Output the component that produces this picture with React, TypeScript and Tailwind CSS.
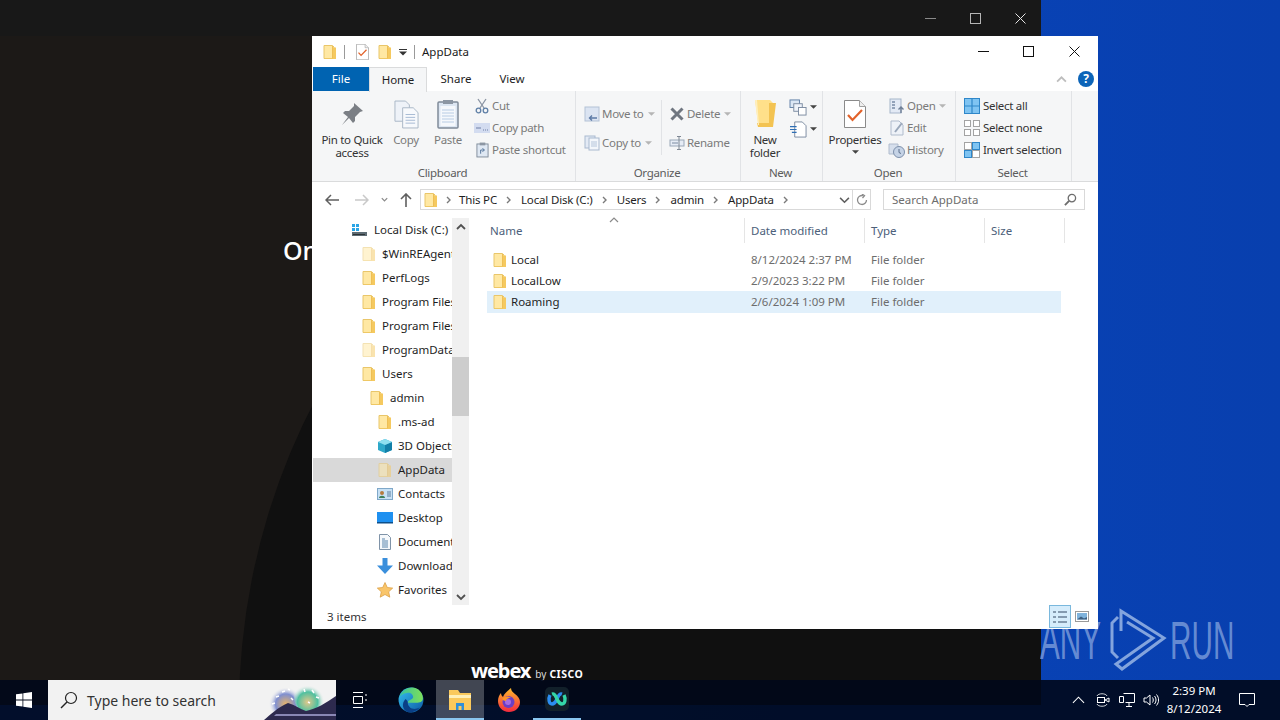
import React from "react";

const Folder = ({ className = "", pale = false }: { className?: string; pale?: boolean }) => (
  <svg viewBox="0 0 16 16" className={"shrink-0 " + className} style={{ opacity: pale ? 0.5 : 1 }}>
    <path d="M2 1.500h8.500L12 3v11.500H2z" fill="#ffe8a3" stroke="#e9c66a" strokeWidth="1" />
    <path d="M10 3.500h4v11.500H3v-.5h7z" fill="#f5c95f" />
    <path d="M10.500 2v12.500" stroke="#eebf55" strokeWidth="1" />
  </svg>
);

const Chev = ({ className = "", d = "M3 2l3 3-3 3", color = "#7a7a7a", w = 1.4 }: { className?: string; d?: string; color?: string; w?: number }) => (
  <svg viewBox="0 0 10 10" className={"shrink-0 " + className} fill="none" stroke={color} strokeWidth={w}>
    <path d={d} />
  </svg>
);

const Caret = ({ color = "#444" }: { color?: string }) => (
  <svg viewBox="0 0 8 4" className="w-[7px] h-[4px] shrink-0"><path d="M0 0h8L4 4z" fill={color} /></svg>
);

const CheckDoc = ({ className = "" }: { className?: string }) => (
  <svg viewBox="0 0 22 28" className={className}>
    <path d="M.5.500h15l6 6v21H.5z" fill="#fff" stroke="#8a8a8a" />
    <path d="M15.500.500v6h6" fill="#eee" stroke="#a0a0a0" />
    <path d="M4 15l4.500 5L18 10" fill="none" stroke="#e2622a" strokeWidth="2.200" />
  </svg>
);

const SmallBtn = ({ icon, label, dim = true, caret = false, labelClass = "ml-[1px]" }: { icon: React.ReactNode; label: string; dim?: boolean; caret?: boolean; labelClass?: string }) => (
  <div className="h-[22px] flex items-center whitespace-nowrap">
    <span className="w-[18px] h-[18px] flex items-center justify-center shrink-0">{icon}</span>
    <span className={labelClass + " " + (dim ? "text-[#7a7a7a]" : "text-[#333]")}>{label}</span>
    {caret && <span className="ml-[4px] -mt-[1px]"><Caret color={dim ? "#b5b5b5" : "#444"} /></span>}
  </div>
);

const Group = ({ label, w, children }: { label: string; w: string; children: React.ReactNode }) => (
  <div className={"relative flex flex-col h-full shrink-0 border-r border-[#e1e3e6] " + w}>
    <div className="flex-1 flex min-h-0">{children}</div>
    <div className="h-[17px] pr-[2px] text-center leading-[17px] text-[#5c5c5c]">{label}</div>
  </div>
);

const LargeBtn = ({ icon, lines, w, dim = false, caret = false }: { icon: React.ReactNode; lines: string[]; w: string; dim?: boolean; caret?: boolean }) => (
  <div className={"flex flex-col items-center shrink-0 " + w}>
    <div className="h-[38px] mt-[4px] flex items-center justify-center">{icon}</div>
    <div className={"leading-[13px] text-center whitespace-nowrap " + (dim ? "text-[#7a7a7a]" : "text-[#333]")}>
      {lines.map((l) => (
        <div key={l}>{l}</div>
      ))}
    </div>
    {caret && <div className="mt-[4px]"><Caret /></div>}
  </div>
);

const Ribbon = () => (
  <div className="h-[91px] bg-[#f5f6f7] border-b border-[#dadbdc] flex text-[11.5px] tracking-[-0.3px] shrink-0">
    <Group label="Clipboard" w="w-[264px]">
      <LargeBtn
        w="w-[80px]"
        lines={["Pin to Quick", "access"]}
        icon={
          <svg viewBox="0 0 24 24" className="w-[24px] h-[24px]">
            <path d="M14 1l9 8-3 1-5 5 0 4-2 2-4-5-7 7 6-8-5-4 2-2 4 0 5-5z" fill="#7b7f85" />
          </svg>
        }
      />
      <LargeBtn
        w="w-[28px]"
        dim
        lines={["Copy"]}
        icon={
          <svg viewBox="0 0 26 30" className="w-[25px] h-[29px]">
            <path d="M1 1h11l4 4v17H1z" fill="#eef2f8" stroke="#a9b6c6" />
            <path d="M9 8h11l5 5v16H9z" fill="#f7f9fc" stroke="#a9b6c6" />
            <path d="M12 15h10M12 18h10M12 21h10M12 24h10" stroke="#a6b9d3" />
          </svg>
        }
      />
      <div className="w-[7px]" />
      <LargeBtn
        w="w-[42px]"
        dim
        lines={["Paste"]}
        icon={
          <svg viewBox="0 0 22 30" className="w-[22px] h-[30px]">
            <rect x="1" y="3" width="20" height="26" rx="1" fill="#dce6f2" stroke="#7f8b99" strokeWidth="1.500" />
            <rect x="3.500" y="7" width="15" height="20" fill="#f5f8fc" />
            <path d="M5 11h12M5 14h12M5 17h12M5 20h12M5 23h12" stroke="#b8cce4" />
            <rect x="6" y="1" width="10" height="4" fill="#8c96a3" />
          </svg>
        }
      />
      <div className="w-[4px]" />
      <div className="pt-[4px] flex flex-col">
        <SmallBtn
          label="Cut"
          icon={
            <svg viewBox="0 0 16 16" className="w-[16px] h-[16px]" fill="none" stroke="#8a94a3" strokeWidth="1.300">
              <path d="M4 1l6 9M12 1L6 10" />
              <circle cx="4.500" cy="12.500" r="2.300" stroke="#5f7fa6" />
              <circle cx="11.500" cy="12.500" r="2.300" stroke="#5f7fa6" />
            </svg>
          }
        />
        <SmallBtn
          label="Copy path"
          icon={
            <svg viewBox="0 0 16 10" className="w-[16px] h-[10px]">
              <rect width="16" height="10" fill="#d3dcf0" />
              <path d="M2 5h5M9 7h1M11 7h1M13 7h1" stroke="#6e7fa6" strokeWidth="1.200" />
            </svg>
          }
        />
        <SmallBtn
          label="Paste shortcut"
          icon={
            <svg viewBox="0 0 14 16" className="w-[13px] h-[16px]">
              <rect x="1" y="1.500" width="12" height="14" fill="#dfe8f3" stroke="#7f8b99" />
              <rect x="4" y="0" width="6" height="3" fill="#8c96a3" />
              <path d="M5 12V8h4M7 6l2 2-2 2" fill="none" stroke="#4f6f96" />
            </svg>
          }
        />
      </div>
    </Group>
    <Group label="Organize" w="w-[165px]">
      <div className="pl-[7px] pt-[12px] w-[85px] flex flex-col gap-[7px]">
        <SmallBtn
          label="Move to"
          caret
          icon={
            <svg viewBox="0 0 16 16" className="w-[16px] h-[16px]">
              <rect x="1" y="1" width="14" height="14" fill="#dbe4f2" stroke="#b4c2d6" />
              <path d="M13 12H6M8 9.500L5.500 12 8 14.500" stroke="#5d7ba6" fill="none" strokeWidth="1.400" />
            </svg>
          }
        />
        <SmallBtn
          label="Copy to"
          caret
          icon={
            <svg viewBox="0 0 16 16" className="w-[16px] h-[16px]">
              <rect x="1" y="1" width="10" height="12" fill="#e3eaf5" stroke="#aab9cf" />
              <rect x="5" y="3" width="10" height="12" fill="#f3f6fb" stroke="#aab9cf" />
              <path d="M7 7h6M7 9h6M7 11h6" stroke="#b5c5db" />
            </svg>
          }
        />
      </div>
      <div className="w-[1px] h-[55px] mt-[9px] bg-[#e1e3e6] mr-[6px]" />
      <div className="pt-[12px] flex flex-col gap-[7px]">
        <SmallBtn
          label="Delete"
          dim
          caret
          icon={
            <svg viewBox="0 0 14 14" className="w-[14px] h-[14px]">
              <path d="M1.500 1.500l11 11M12.500 1.500l-11 11" stroke="#6f7680" strokeWidth="3" />
            </svg>
          }
        />
        <SmallBtn
          label="Rename"
          icon={
            <svg viewBox="0 0 16 16" className="w-[16px] h-[16px]" fill="none">
              <rect x="1" y="5" width="14" height="6" fill="#e6ecf5" stroke="#9aa7b8" />
              <path d="M3 8h6" stroke="#7b8aa0" />
              <path d="M10 1.500v13M8 1.500h4M8 14.500h4" stroke="#7f8894" />
            </svg>
          }
        />
      </div>
    </Group>
    <Group label="New" w="w-[82px]">
      <LargeBtn
        w="w-[48px]"
        lines={["New", "folder"]}
        icon={
          <svg viewBox="0 0 24 30" className="w-[24px] h-[30px]">
            <path d="M2 1h15l3 3v20H5z" fill="#ffe08a" />
            <path d="M16 4h7l-3 24-15 0-1-4h12z" fill="#f3c352" />
            <path d="M2 1l3 25h1L4 1z" fill="#ffefbd" />
          </svg>
        }
      />
      <div className="pt-[7px] flex flex-col gap-[4px]">
        <div className="flex items-center gap-[2px] h-[18px]">
          <svg viewBox="0 0 20 18" className="w-[19px] h-[17px]">
            <rect x="1" y="1" width="10" height="8" fill="#dbe7f5" stroke="#5f7fa6" />
            <rect x="5" y="5" width="9" height="8" fill="#eef3fa" stroke="#7b8aa0" />
            <rect x="10" y="9" width="8" height="8" fill="#fff" stroke="#7b8aa0" />
          </svg>
          <Caret />
        </div>
        <div className="flex items-center gap-[2px] h-[18px]">
          <svg viewBox="0 0 20 18" className="w-[19px] h-[17px]">
            <path d="M6 1h8l4 4v12H6z" fill="#fff" stroke="#7b8aa0" />
            <path d="M1 6h7M1 9h7M3 12h5" stroke="#2f6fb5" strokeWidth="1.200" />
          </svg>
          <Caret />
        </div>
      </div>
    </Group>
    <Group label="Open" w="w-[133px]">
      <LargeBtn w="w-[64px]" lines={["Properties"]} caret icon={<CheckDoc className="w-[22px] h-[28px]" />} />
      <div className="pt-[4px] pl-[1px] flex flex-col">
        <SmallBtn
          label="Open"
          caret
          icon={
            <svg viewBox="0 0 16 16" className="w-[16px] h-[16px]">
              <rect x="1" y="1" width="11" height="14" fill="#e3eaf5" stroke="#a6b5ca" />
              <path d="M3 4h3M3 7h3M3 10h3" stroke="#7a8ca6" strokeWidth="1.500" />
              <path d="M12 15V9M9.500 11.500L12 9l2.500 2.500" stroke="#6f7f96" fill="none" strokeWidth="1.400" />
            </svg>
          }
        />
        <SmallBtn
          label="Edit"
          icon={
            <svg viewBox="0 0 16 16" className="w-[16px] h-[16px]">
              <path d="M2 1h8l4 4v10H2z" fill="#eef2f8" stroke="#b0bccd" />
              <path d="M6 12L13 3" stroke="#9aa8bb" strokeWidth="2" />
            </svg>
          }
        />
        <SmallBtn
          label="History"
          icon={
            <svg viewBox="0 0 18 16" className="w-[18px] h-[16px]">
              <path d="M1 2h9v10H1z" fill="#d6dfec" stroke="#b0bccd" />
              <circle cx="11" cy="10" r="5.500" fill="#c5d3e6" stroke="#7d90ab" />
              <path d="M11 7v3.500l2 1" stroke="#5b6f8c" fill="none" />
            </svg>
          }
        />
      </div>
    </Group>
    <Group label="Select" w="w-[116px]">
      <div className="pl-[7px] pt-[4px] flex flex-col">
        <SmallBtn
          label="Select all"
          dim={false}
          labelClass="ml-[2px]"
          icon={
            <svg viewBox="0 0 16 16" className="w-[16px] h-[16px]">
              <rect x=".5" y=".5" width="15" height="15" fill="#7fc4f2" stroke="#2f87c9" />
              <path d="M8 0v16M0 8h16" stroke="#2f87c9" strokeWidth="1.200" />
            </svg>
          }
        />
        <SmallBtn
          label="Select none"
          dim={false}
          labelClass="ml-[2px]"
          icon={
            <svg viewBox="0 0 16 16" className="w-[16px] h-[16px]" fill="#fff" stroke="#a3a3a3">
              <rect x=".5" y=".5" width="6" height="6" />
              <rect x="9.500" y=".5" width="6" height="6" />
              <rect x=".5" y="9.500" width="6" height="6" />
              <rect x="9.500" y="9.500" width="6" height="6" />
            </svg>
          }
        />
        <SmallBtn
          label="Invert selection"
          dim={false}
          labelClass="ml-[2px]"
          icon={
            <svg viewBox="0 0 16 16" className="w-[16px] h-[16px]" stroke="#2f87c9">
              <rect x=".5" y="8.500" width="7" height="7" fill="#7fc4f2" />
              <rect x="8.500" y=".5" width="7" height="7" fill="#7fc4f2" />
              <rect x=".5" y=".5" width="7" height="7" fill="#fff" stroke="#a3a3a3" />
              <rect x="8.500" y="8.500" width="7" height="7" fill="#fff" stroke="#a3a3a3" />
            </svg>
          }
        />
      </div>
    </Group>
  </div>
);

const Crumb = ({ t }: { t: string }) => (
  <>
    <span className="whitespace-nowrap text-[#1e1e1e] tracking-[-0.17px]">{t}</span>
    <Chev className="w-[10px] h-[10px] mx-[7px]" />
  </>
);

const AddressBar = () => (
  <div className="h-[35px] flex items-center shrink-0 bg-white">
    <div className="w-[108px] flex items-center shrink-0">
      <svg viewBox="0 0 14 12" className="ml-[13px] w-[14px] h-[12px]" fill="none" stroke="#5f5f5f" strokeWidth="1.500">
        <path d="M14 6H1M6 1L1 6l5 5" />
      </svg>
      <svg viewBox="0 0 14 12" className="ml-[16px] w-[14px] h-[12px]" fill="none" stroke="#c9c9c9" strokeWidth="1.500">
        <path d="M0 6h13M8 1l5 5-5 5" />
      </svg>
      <Chev className="ml-[11px] w-[9px] h-[9px]" d="M2 3.500l3 3 3-3" color="#8a8a8a" />
      <svg viewBox="0 0 12 14" className="ml-[11px] w-[12px] h-[14px]" fill="none" stroke="#5f5f5f" strokeWidth="1.600">
        <path d="M6 14V1M1 6l5-5 5 5" />
      </svg>
    </div>
    <div className="w-[451px] h-[21px] border border-[#d9d9d9] flex items-center shrink-0">
      <Folder className="w-[16px] h-[16px] ml-[2px]" />
      <Chev className="w-[10px] h-[10px] ml-[5px] mr-[5px]" />
      <Crumb t="This PC" />
      <Crumb t="Local Disk (C:)" />
      <Crumb t="Users" />
      <Crumb t="admin" />
      <Crumb t="AppData" />
      <div className="flex-1" />
      <Chev className="w-[11px] h-[11px] mr-[1px]" d="M1 3.500l4 4 4-4" color="#5f5f5f" />
      <div className="w-[1px] h-full bg-[#d9d9d9] mx-[1px]" />
      <svg viewBox="0 0 12 12" className="w-[12px] h-[12px] mx-[2px]" fill="none" stroke="#8a8a8a" strokeWidth="1.300">
        <path d="M10.500 6A4.500 4.500 0 1 1 7 1.600" />
        <path d="M6 0l2.500 1.700L6.500 4" />
      </svg>
    </div>
    <div className="ml-[12px] w-[202px] h-[21px] border border-[#d9d9d9] flex items-center justify-between pl-[8px] pr-[7px] text-[#6d6d6d] shrink-0">
      <span>Search AppData</span>
      <svg viewBox="0 0 14 14" className="w-[13px] h-[13px]" fill="none" stroke="#6d6d6d" strokeWidth="1.400">
        <circle cx="8.500" cy="5.500" r="4" />
        <path d="M5.500 8.500L1 13" strokeWidth="2" />
      </svg>
    </div>
  </div>
);

const depthClass: Record<number, string> = { 0: "pl-[39px]", 1: "pl-[49px]", 2: "pl-[57px]", 3: "pl-[65px]" };

const DriveIcon = () => (
  <svg viewBox="0 0 16 16" className="w-[16px] h-[16px] shrink-0">
    <rect x="1" y="10" width="15" height="4" fill="#5d6b73" />
    <rect x="2" y="12" width="12" height="1" fill="#2d3336" />
    <rect x="1" y="2" width="3" height="3" fill="#2aa5e6" />
    <rect x="5" y="2" width="3" height="3" fill="#2aa5e6" />
    <rect x="1" y="6" width="3" height="3" fill="#2aa5e6" />
    <rect x="5" y="6" width="3" height="3" fill="#2aa5e6" />
  </svg>
);
const CubeIcon = () => (
  <svg viewBox="0 0 16 16" className="w-[16px] h-[16px] shrink-0">
    <path d="M8 1l7 3v8l-7 3-7-3V4z" fill="#2ea8c9" />
    <path d="M8 7l7-3v8l-7 3z" fill="#137fa8" />
    <path d="M8 1l7 3-7 3-7-3z" fill="#8fe0f0" />
  </svg>
);
const ContactsIcon = () => (
  <svg viewBox="0 0 16 16" className="w-[16px] h-[16px] shrink-0">
    <rect x=".5" y="2.500" width="15" height="11" fill="#c7e0f4" stroke="#7fa8c9" />
    <circle cx="5" cy="7" r="2" fill="#b57b3e" />
    <path d="M2 12c0-3 6-3 6 0z" fill="#3e7f5a" />
    <path d="M10 6h4M10 8h4M10 10h4" stroke="#5d7f9e" />
  </svg>
);
const DesktopIcon = () => (
  <svg viewBox="0 0 16 16" className="w-[16px] h-[16px] shrink-0">
    <rect x="0" y="2" width="16" height="11" fill="#1e90f0" />
    <rect x="0" y="12" width="16" height="1.500" fill="#0d4f8a" />
  </svg>
);
const DocIcon = () => (
  <svg viewBox="0 0 16 16" className="w-[16px] h-[16px] shrink-0">
    <path d="M2.500.500h8l3 3v12h-11z" fill="#f5f8fb" stroke="#7f93a8" />
    <path d="M5 5h3M5 7h6M5 9h6M5 11h6M5 13h6" stroke="#5b86ad" />
  </svg>
);
const DownloadIcon = () => (
  <svg viewBox="0 0 16 16" className="w-[16px] h-[16px] shrink-0">
    <path d="M5.500 0h5v7.500H16L8 16 0 7.500h5.500z" fill="#3a8fdc" />
  </svg>
);
const StarIcon = () => (
  <svg viewBox="0 0 16 16" className="w-[16px] h-[16px] shrink-0">
    <path d="M8 .5l2.300 5 5.400.6-4 3.700 1.100 5.400L8 12.500l-4.800 2.700 1.100-5.400-4-3.700 5.400-.6z" fill="#f9c56a" stroke="#d99a3c" strokeWidth=".7" />
  </svg>
);

const navRows: { t: string; d: number; icon: React.ReactNode; sel?: boolean; gap?: string }[] = [
  { t: "Local Disk (C:)", d: 0, icon: <DriveIcon />, gap: "ml-[7px]" },
  { t: "$WinREAgent", d: 1, icon: <Folder pale className="w-[16px] h-[16px]" /> },
  { t: "PerfLogs", d: 1, icon: <Folder className="w-[16px] h-[16px]" /> },
  { t: "Program Files", d: 1, icon: <Folder className="w-[16px] h-[16px]" /> },
  { t: "Program Files (x86)", d: 1, icon: <Folder className="w-[16px] h-[16px]" /> },
  { t: "ProgramData", d: 1, icon: <Folder pale className="w-[16px] h-[16px]" /> },
  { t: "Users", d: 1, icon: <Folder className="w-[16px] h-[16px]" /> },
  { t: "admin", d: 2, icon: <Folder className="w-[16px] h-[16px]" /> },
  { t: ".ms-ad", d: 3, icon: <Folder className="w-[16px] h-[16px]" /> },
  { t: "3D Objects", d: 3, icon: <CubeIcon /> },
  { t: "AppData", d: 3, icon: <Folder pale className="w-[16px] h-[16px]" />, sel: true },
  { t: "Contacts", d: 3, icon: <ContactsIcon /> },
  { t: "Desktop", d: 3, icon: <DesktopIcon /> },
  { t: "Documents", d: 3, icon: <DocIcon /> },
  { t: "Downloads", d: 3, icon: <DownloadIcon /> },
  { t: "Favorites", d: 3, icon: <StarIcon /> },
];

const NavPane = () => (
  <div className="w-[157px] flex shrink-0 pt-[1px]">
    <div className="w-[140px] flex flex-col overflow-hidden">
      {navRows.map((r) => (
        <div
          key={r.t}
          className={
            "h-[24px] flex items-center shrink-0 whitespace-nowrap text-[#1e1e1e] " +
            depthClass[r.d] +
            (r.sel ? " bg-[#d9d9d9] ml-[1px] !pl-[64px]" : "")
          }
        >
          {r.icon}
          <span className={r.gap ?? "ml-[5px]"}>{r.t}</span>
        </div>
      ))}
    </div>
    <div className="w-[17px] bg-[#f0f0f0] flex flex-col items-center justify-between">
      <div className="flex flex-col items-center w-full">
        <Chev className="w-[10px] h-[10px] mt-[4px]" d="M1 7l4-4 4 4" color="#505050" w={1.8} />
        <div className="w-full h-[59px] mt-[125px] bg-[#cdcdcd]" />
      </div>
      <Chev className="w-[10px] h-[10px] mb-[3px]" d="M1 3l4 4 4-4" color="#505050" w={1.8} />
    </div>
  </div>
);

const files = [
  { n: "Local", d: "8/12/2024 2:37 PM" },
  { n: "LocalLow", d: "2/9/2023 3:22 PM" },
  { n: "Roaming", d: "2/6/2024 1:09 PM", sel: true },
];

const FileList = () => (
  <div className="flex-1 min-w-0 pl-[18px]">
    <div className="relative h-[26px] flex text-[#4c607a] pt-[1px]">
      <div className="w-[258px] pl-[3px] flex items-center border-r border-[#e5e5e5] h-[25px]">Name</div>
      <div className="w-[120px] pl-[6px] flex items-center border-r border-[#e5e5e5] h-[25px]">Date modified</div>
      <div className="w-[120px] pl-[6px] flex items-center border-r border-[#e5e5e5] h-[25px]">Type</div>
      <div className="w-[80px] pl-[6px] flex items-center border-r border-[#e5e5e5] h-[25px]">Size</div>
      <Chev className="absolute left-[122px] -top-[1px] w-[10px] h-[10px]" d="M1 6l4-4 4 4" color="#8a8a8a" w={1.2} />
    </div>
    <div className="w-[574px] pt-[6px]">
      {files.map((f) => (
        <div key={f.n} className={"flex items-center " + (f.sel ? "h-[22px] bg-[#e1f0fb]" : "h-[21px]")}>
          <div className="w-[258px] flex items-center pl-[5px]">
            <Folder className="w-[16px] h-[16px]" />
            <span className="ml-[3px] text-[#1e1e1e]">{f.n}</span>
          </div>
          <div className="w-[120px] pl-[6px] text-[#6d6d6d]">{f.d}</div>
          <div className="pl-[6px] text-[#6d6d6d]">File folder</div>
        </div>
      ))}
    </div>
  </div>
);

const Explorer = () => (
  <div className="absolute left-[312px] top-[36px] w-[786px] h-[593px] bg-white flex flex-col text-[11.5px] text-[#1e1e1e] font-['Noto_Sans',sans-serif]">
    <div className="h-[31px] flex items-center shrink-0 relative">
      <Folder className="ml-[10px] w-[16px] h-[16px]" />
      <div className="ml-[6px] w-[1px] h-[14px] bg-[#9a9a9a]" />
      <CheckDoc className="ml-[11px] w-[13px] h-[16px]" />
      <Folder className="ml-[8px] w-[16px] h-[16px]" />
      <svg viewBox="0 0 8 8" className="ml-[6px] w-[8px] h-[8px]">
        <path d="M0 1h8v1H0zM0 3.500h8L4 7.500z" fill="#333" />
      </svg>
      <div className="ml-[7px] w-[1px] h-[14px] bg-[#9a9a9a]" />
      <span className="ml-[7px] text-[#1a1a1a]">AppData</span>
      <div className="flex-1" />
      <svg viewBox="0 0 11 11" className="w-[11px] h-[11px]" stroke="#111" strokeWidth="1"><path d="M0 5.500h11" /></svg>
      <svg viewBox="0 0 11 11" className="ml-[34px] w-[11px] h-[11px]" stroke="#111" fill="none" strokeWidth="1"><rect x=".5" y=".5" width="10" height="10" /></svg>
      <svg viewBox="0 0 11 11" className="ml-[35px] mr-[18px] w-[11px] h-[11px]" stroke="#111" strokeWidth="1"><path d="M.5.500l10 10M10.500.500l-10 10" /></svg>
    </div>
    <div className="h-[24px] flex items-stretch shrink-0 relative">
      <div className="ml-[1px] w-[56px] bg-[#0063b1] text-white flex items-center justify-center">File</div>
      <div className="w-[58px] h-[25px] bg-[#f5f6f7] border border-b-0 border-[#dadbdc] flex items-center justify-center z-10">Home</div>
      <div className="w-[58px] flex items-center justify-center">Share</div>
      <div className="w-[54px] flex items-center justify-center">View</div>
      <div className="flex-1" />
      <Chev className="w-[11px] h-[11px] self-center mr-[11px]" d="M1 7l4-4 4 4" color="#bdbdbd" w={1.6} />
      <div className="w-[16px] h-[16px] self-center mr-[4px] rounded-full bg-[#0c64b8] text-white flex items-center justify-center text-[12px] font-bold">?</div>
    </div>
    <Ribbon />
    <AddressBar />
    <div className="flex-1 flex min-h-0">
      <NavPane />
      <FileList />
    </div>
    <div className="h-[24px] flex items-center shrink-0 relative pl-[15px] text-[#333]">
      <span>3 items</span>
      <div className="absolute left-[737px] top-0 w-[22px] h-[23px] bg-[#d5ecfb] border border-[#7ab8dd] flex items-center justify-center">
        <svg viewBox="0 0 16 14" className="w-[16px] h-[14px]" fill="none" stroke="#6a7f96">
          <path d="M1 2h3M1 7h3M1 12h3M6 2h9M6 7h9M6 12h9" strokeWidth="1.600" />
        </svg>
      </div>
      <svg viewBox="0 0 14 11" className="absolute left-[763px] top-[6px] w-[14px] h-[11px]">
        <rect x=".5" y=".5" width="13" height="10" fill="#fff" stroke="#9a9a9a" />
        <rect x="2" y="2" width="10" height="6.500" fill="#7fb3dc" />
        <path d="M2 8.500l4-3 3 2 3-1.500v2.500z" fill="#3d5f80" />
      </svg>
    </div>
  </div>
);

const WebexWindow = () => (
  <div className="absolute left-0 top-0 w-[1041px] h-[705px] bg-[#0f0f0f] overflow-hidden font-['Noto_Sans',sans-serif]">
    <div className="absolute inset-0 bg-[#1c1917]" />
    <div className="absolute left-[239px] top-[40px] w-[1340px] h-[1340px] rounded-full bg-[#101010]" />
    <div className="absolute inset-x-0 top-0 h-[36px] bg-[#181818] flex items-center justify-end">
      <svg viewBox="0 0 11 11" className="w-[11px] h-[11px]" stroke="#8a8a8a"><path d="M0 5.500h11" /></svg>
      <svg viewBox="0 0 11 11" className="ml-[34px] w-[11px] h-[11px]" stroke="#b5b5b5" fill="none"><rect x=".5" y=".5" width="10" height="10" /></svg>
      <svg viewBox="0 0 11 11" className="ml-[34px] mr-[15px] w-[11px] h-[11px]" stroke="#e5e5e5"><path d="M.5.500l10 10M10.500.500l-10 10" /></svg>
    </div>
    <div className="absolute left-[283px] top-[232px] text-[25px] leading-[36px] font-medium text-white">On</div>
    <div className="absolute left-[471px] top-[659px] flex items-baseline text-white whitespace-nowrap">
      <span className="text-[20px] leading-[24px] font-bold tracking-[-1.1px]">webex</span>
      <span className="ml-[5px] text-[10px] text-[#ddd]">by</span>
      <span className="ml-[3px] text-[10.5px] font-bold tracking-[0.5px]">CISCO</span>
    </div>
  </div>
);

const Watermark = () => (
  <div className="absolute left-[1040px] top-[605px] flex items-center text-[#7f9fdc]/80 font-['Liberation_Sans',sans-serif] pointer-events-none">
    <span className="w-[60px] text-[54px] leading-[70px] origin-left scale-x-[0.55] inline-block whitespace-nowrap">ANY</span>
    <svg viewBox="0 0 70 70" className="w-[70px] h-[70px]" fill="none" stroke="#a3bde8" strokeOpacity="0.8" strokeWidth="3">
      <path d="M21 26V6L64 33L22 64L16 59L53 33L27 17" />
      <path d="M18 12L12 18V47L18 53" />
    </svg>
    <span className="w-[62px] text-[54px] leading-[70px] origin-left scale-x-[0.55] inline-block whitespace-nowrap">RUN</span>
  </div>
);

const Taskbar = () => (
  <div className="absolute left-0 right-0 bottom-0 h-[40px] bg-[#01081a]/90 flex items-center text-white font-['Noto_Sans',sans-serif]">
    <svg viewBox="0 0 16 16" className="ml-[16px] w-[16px] h-[16px]" fill="#fff">
      <path d="M0 2.300l6.500-.9v6.200H0zM7.300 1.300L16 0v7.600H7.300zM0 8.400h6.500v6.200L0 13.700zM7.300 8.400H16V16l-8.700-1.200z" />
    </svg>
    <div className="ml-[16px] w-[288px] h-[40px] bg-[#f2f2f2] relative flex items-center text-[#333] overflow-hidden">
      <svg viewBox="0 0 18 18" className="ml-[12px] w-[18px] h-[18px]" fill="none" stroke="#222" strokeWidth="1.200">
        <circle cx="11" cy="7" r="5.500" />
        <path d="M7 11l-6 6" strokeWidth="1.500" />
      </svg>
      <span className="ml-[9px] text-[14px]">Type here to search</span>
      <svg viewBox="0 0 72 40" className="absolute right-0 top-0 w-[72px] h-[40px]">
        <defs>
          <radialGradient id="a1" cx=".55" cy=".65"><stop offset="0" stopColor="#e9b56a" /><stop offset=".6" stopColor="#7f8fd0" /><stop offset="1" stopColor="#f2f2f2" stopOpacity="0" /></radialGradient>
          <radialGradient id="a2" cx=".4" cy=".65"><stop offset="0" stopColor="#e3c88a" /><stop offset=".6" stopColor="#4fc0a0" /><stop offset="1" stopColor="#f2f2f2" stopOpacity="0" /></radialGradient>
        </defs>
        <circle cx="20" cy="19" r="17" fill="url(#a1)" />
        <circle cx="47" cy="17" r="17" fill="url(#a2)" />
        <path d="M12 17l3-1M18 12l3-1M24 9l2 1M40 9l1 3M48 10l2 3M52 17l3 1M8 24l3-1M27 18l2 2M44 22l2 1" stroke="#fff" strokeWidth="1.500" />
        <path d="M0 40c6-5 14-13 24-17 7 2 12 6 18 8 10-2 20-8 30-15v24z" fill="#2d2a4e" />
        <path d="M12 34h60v2H10z" fill="#8a88b5" />
      </svg>
    </div>
    <svg viewBox="0 0 16 16" className="ml-[16px] w-[16px] h-[16px]" fill="none" stroke="#fff">
      <path d="M1 .5h10M1 15.500h10M1.500 4.500h9v7h-9zM14 2v2M14 7v2" />
    </svg>
    <svg viewBox="0 0 24 24" className="ml-[30px] w-[26px] h-[26px]">
      <defs>
        <linearGradient id="e1" x1="0" y1="0" x2="1" y2="1"><stop offset="0" stopColor="#35c1f1" /><stop offset="1" stopColor="#0c59a4" /></linearGradient>
        <linearGradient id="e2" x1="0" y1="0" x2="1" y2="0"><stop offset="0" stopColor="#35c1a0" /><stop offset="1" stopColor="#7ee05a" /></linearGradient>
      </defs>
      <circle cx="12" cy="12" r="11.500" fill="url(#e1)" />
      <path d="M1 10C3 3 9 .5 13 .5c6 0 10 5 10 10 0 3-3 4-6 4H9c0-3 4-2 5-5 0-3-3-5-6-4-3 .5-6 2-7 4.500z" fill="url(#e2)" />
      <path d="M9 14c0 5 5 8 11 5-3 4-8 5-11 4-5-2-6-8-2-12 1 1 2 1.500 2 3z" fill="#0a3f86" />
    </svg>
    <div className="ml-[12px] w-[48px] h-[40px] bg-white/25 border-b-[2px] border-[#8ac6f0] flex items-center justify-center">
      <svg viewBox="0 0 22 20" className="w-[22px] h-[20px] mt-[1px]">
        <path d="M0 0h9l2 3h11v17H0z" fill="#fac95c" />
        <rect x="0" y="5" width="22" height="3" fill="#fff0b8" />
        <path d="M7 20v-7h8v7h-2.500v-4h-3v4z" fill="#2f8fd8" />
      </svg>
    </div>
    <svg viewBox="0 0 24 24" className="ml-[13px] w-[24px] h-[24px]">
      <defs>
        <linearGradient id="f1" x1="0" y1="0" x2="0" y2="1"><stop offset="0" stopColor="#ffbc2c" /><stop offset="1" stopColor="#f2293e" /></linearGradient>
      </defs>
      <path d="M12 24C5 24 1 18.500 1 13c0-3 1-6 3-8 0 2 1 3 2 4 1-4 5-6 8-9 0 3 2 4 4 6 3 2 5 5 5 8 0 6-5 10-11 10z" fill="url(#f1)" />
      <circle cx="11.500" cy="14" r="6" fill="#6a3fc4" />
      <circle cx="11" cy="14" r="3" fill="#a56be0" />
      <path d="M5 11c3-3 7-3 9-1-3 0-5 1-5 3-2 0-3-1-4-2z" fill="#ff9528" />
    </svg>
    <div className="ml-[12px] w-[48px] h-[40px] border-b-[2px] border-[#8ac6f0] flex items-center justify-center">
      <svg viewBox="0 0 24 24" className="w-[24px] h-[24px]">
        <rect width="24" height="24" rx="5" fill="#12202a" />
        <path d="M5 8c-2 4 -1 9 2 9s4-3 5-5 2-6 5-5" fill="none" stroke="#2b8df0" strokeWidth="3.400" />
        <path d="M19 8c2 4 1 9-2 9s-4-3-5-5-2-6-5-5" fill="none" stroke="#34d6a8" strokeWidth="3.400" />
      </svg>
    </div>
    <div className="flex-1" />
    <svg viewBox="0 0 14 8" className="w-[13px] h-[8px]" fill="none" stroke="#fff" strokeWidth="1.100"><path d="M1 7l6-6 6 6" /></svg>
    <svg viewBox="0 0 16 16" className="ml-[10px] w-[16px] h-[16px]" fill="none" stroke="#fff">
      <path d="M2 4c1-3 9-3 10 0M2 12c1 3 9 3 10 0" strokeWidth=".8" />
      <rect x="2.500" y="5.500" width="7" height="5" />
      <path d="M10 8l4-2v4z" />
    </svg>
    <svg viewBox="0 0 16 16" className="ml-[8px] w-[16px] h-[16px]" fill="none" stroke="#fff">
      <path d="M4.500 1.500h11v9h-9M.5 4.500h4v6h-4zM7 14.500h6M10 10.500v4" />
    </svg>
    <svg viewBox="0 0 16 16" className="ml-[8px] w-[16px] h-[16px]" fill="none" stroke="#fff">
      <path d="M1 6h2.500L7 3v10L3.500 10H1zM9.500 5.500c1 1.500 1 3.500 0 5M11.500 4c2 2.500 2 5.500 0 8M13.500 2.500c2.800 3.500 2.800 7.500 0 11" />
    </svg>
    <div className="ml-[4px] w-[62px] text-center text-[11.5px] leading-[18px] whitespace-nowrap">
      <div>2:39 PM</div>
      <div>8/12/2024</div>
    </div>
    <svg viewBox="0 0 16 16" className="ml-[14px] mr-[25px] w-[16px] h-[16px]" fill="none" stroke="#fff">
      <path d="M.5 1.500h15v11H10l-2 2-2-2H.5z" />
    </svg>
  </div>
);

export default function App() {
  return (
    <div className="relative w-[1280px] h-[720px] overflow-hidden bg-gradient-to-r from-[#0a4ccb] to-[#083fae]">
      <WebexWindow />
      <Watermark />
      <Explorer />
      <Taskbar />
    </div>
  );
}
